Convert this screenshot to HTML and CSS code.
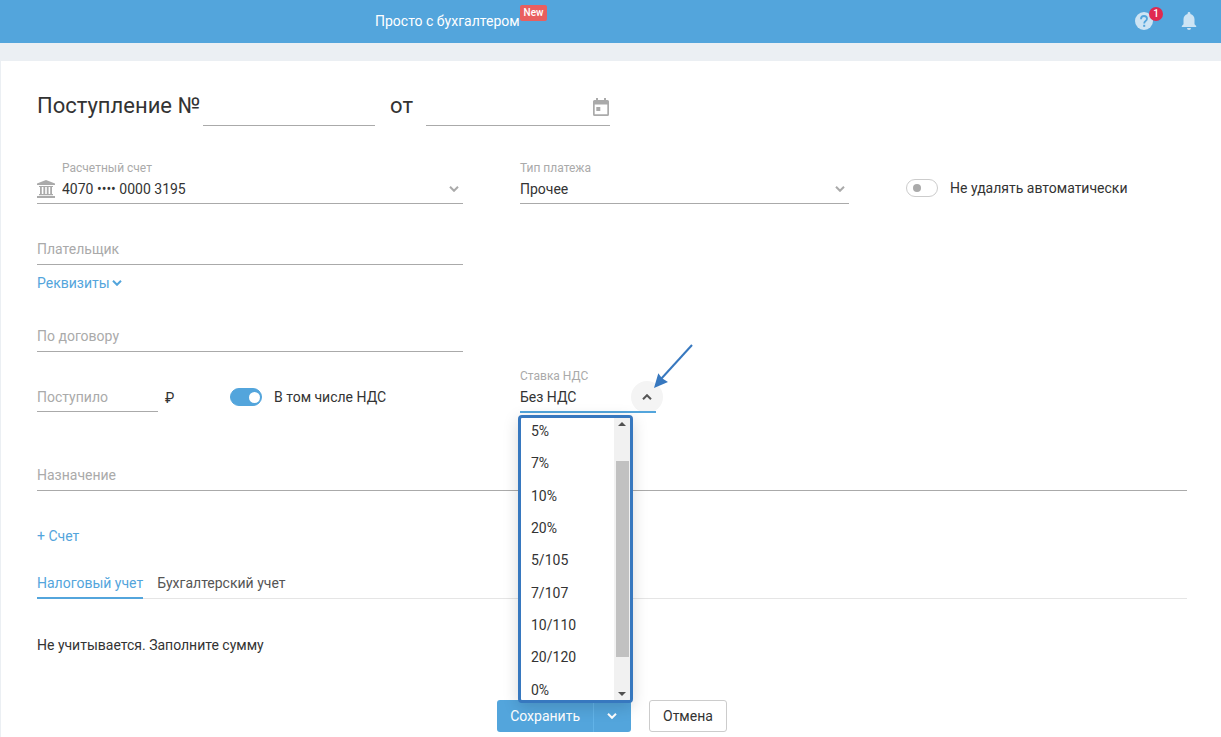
FILE: index.html
```html
<!DOCTYPE html>
<html lang="ru">
<head>
    <meta charset="UTF-8">
    <meta name="viewport" content="width=device-width, initial-scale=1.0">
    <title>Поступление</title>
    <link rel="stylesheet" href="styles.css">
</head>
<body>
    <header class="header">
        <a class="promo" href="#">Просто с бухгалтером<span class="promo-badge">New</span></a>
        <div class="header-icons">
            <button class="icon-btn" type="button" aria-label="Помощь">
                <svg width="18" height="18" viewBox="0 0 18 18">
                    <circle cx="9" cy="9" r="9" fill="#cde4f4"/>
                    <path d="M6 7.200C6 5.200 7.300 4 9 4s3 1.100 3 2.800c0 2-2.800 2.300-2.800 4.700" fill="none" stroke="#53a5dc" stroke-width="1.800"/>
                    <rect x="8.200" y="12.800" width="2" height="2" fill="#53a5dc"/>
                </svg>
                <span class="count">1</span>
            </button>
            <button class="icon-btn" type="button" aria-label="Уведомления">
                <svg width="16" height="20" viewBox="0 0 16 20">
                    <path d="M8 1c-.8 0-1.4.6-1.4 1.4v.5C4 3.500 2.500 5.700 2.500 8.300v5L.8 15v1h14.400v-1l-1.700-1.700v-5c0-2.600-1.500-4.800-4.100-5.400v-.5C9.400 1.600 8.800 1 8 1zM6 17a2 2 0 0 0 4 0z" fill="#cde4f4"/>
                </svg>
            </button>
        </div>
    </header>

    <main class="page">
        <form class="form">
            <div class="title">
                <label for="number">Поступление №</label>
                <input class="control number" type="text" id="number">
                <label class="title-from" for="date">от</label>
                <div class="date">
                    <input class="control" type="text" id="date">
                    <svg class="calendar" width="16" height="18" viewBox="0 0 16 18">
                        <path d="M3 0h2v2h6V0h2v2h1.500A1.500 1.500 0 0 1 16 3.500v13a1.500 1.500 0 0 1-1.500 1.500h-13A1.500 1.500 0 0 1 0 16.500v-13A1.500 1.500 0 0 1 1.500 2H3zM1.700 6.500v9.800h12.600V6.500z" fill="#aaa" fill-rule="evenodd"/>
                        <rect x="3.300" y="9" width="4" height="4" fill="#aaa"/>
                    </svg>
                </div>
            </div>

            <div class="row">
                <div class="field with-icon">
                    <svg class="bank" width="18" height="18" viewBox="0 0 18 18" fill="#aaa">
                        <path d="M9 0l9 3.500V5H0V3.500zM2 6h14v1H2zM2 14h14v1.300H2zM0 16h18v2H0z"/>
                        <path d="M3 7h1.800v7H3zM6.400 7h1.800v7H6.400zM9.800 7h1.800v7H9.800zM13.200 7H15v7h-1.800z"/>
                    </svg>
                    <label class="caption" for="account">Расчетный счет</label>
                    <select class="control" id="account">
                        <option>4070 •••• 0000 3195</option>
                    </select>
                    <svg class="arrow chevron" width="10" height="6" viewBox="0 0 10 6"><path d="M1 .8l4 4 4-4"/></svg>
                </div>
                <div class="field">
                    <label class="caption" for="type">Тип платежа</label>
                    <select class="control" id="type">
                        <option>Прочее</option>
                    </select>
                    <svg class="arrow chevron" width="10" height="6" viewBox="0 0 10 6"><path d="M1 .8l4 4 4-4"/></svg>
                </div>
                <label class="switch">
                    <input type="checkbox">
                    Не удалять автоматически
                </label>
            </div>

            <div class="row payer">
                <div class="field">
                    <input class="control" type="text" placeholder="Плательщик" aria-label="Плательщик">
                    <a class="link details" href="#">Реквизиты <svg class="arrow" width="10" height="6" viewBox="0 0 10 6"><path d="M1 .8l4 4 4-4"/></svg></a>
                </div>
            </div>

            <div class="row contract">
                <div class="field">
                    <input class="control" type="text" placeholder="По договору" aria-label="По договору">
                </div>
            </div>

            <div class="row amounts">
                <div class="amount">
                    <div class="sum">
                        <input class="control" type="text" placeholder="Поступило" aria-label="Поступило">
                        <span>₽</span>
                    </div>
                    <label class="switch">
                        <input type="checkbox" checked>
                        В том числе НДС
                    </label>
                </div>
                <div class="field vat">
                    <label class="caption" for="vat">Ставка НДС</label>
                    <span class="vat-circle"></span>
                    <select class="control" id="vat">
                        <option>Без НДС</option>
                    </select>
                    <svg class="arrow chevron" width="10" height="6" viewBox="0 0 10 6"><path d="M1 5.200l4-4 4 4"/></svg>
                    <svg class="pointer" width="42" height="46" viewBox="0 0 42 46">
                        <path d="M40 2L9 36" stroke="#3778bf" stroke-width="2"/>
                        <path d="M2 45L6.300 30.300l3.700 5 6 3.700z" fill="#3778bf"/>
                    </svg>
                    <div class="menu">
                        <ul class="options" role="listbox" aria-label="Ставка НДС">
                            <li role="option">5%</li>
                            <li role="option">7%</li>
                            <li role="option">10%</li>
                            <li role="option">20%</li>
                            <li role="option">5/105</li>
                            <li role="option">7/107</li>
                            <li role="option">10/110</li>
                            <li role="option">20/120</li>
                            <li role="option">0%</li>
                        </ul>
                        <div class="scrollbar">
                            <svg width="8" height="4" viewBox="0 0 8 4"><path d="M0 4l4-4 4 4z" fill="#505050"/></svg>
                            <span class="thumb"></span>
                            <svg width="8" height="4" viewBox="0 0 8 4"><path d="M0 0l4 4 4-4z" fill="#505050"/></svg>
                        </div>
                    </div>
                </div>
            </div>

            <input class="control purpose" type="text" placeholder="Назначение" aria-label="Назначение">

            <a class="link add-bill" href="#">+ Счет</a>

            <nav class="tabs">
                <a class="tab active" href="#">Налоговый учет</a>
                <a class="tab" href="#">Бухгалтерский учет</a>
            </nav>
            <p class="note">Не учитывается. Заполните сумму</p>

            <div class="actions">
                <div class="save">
                    <button class="btn btn-save" type="button">Сохранить</button>
                    <button class="btn btn-more" type="button" aria-label="Другие действия">
                        <svg class="arrow" width="10" height="6" viewBox="0 0 10 6"><path d="M1 .8l4 4 4-4"/></svg>
                    </button>
                </div>
                <button class="btn btn-cancel" type="button">Отмена</button>
            </div>
        </form>
    </main>
</body>
</html>
```
FILE: styles.css
```css
* {
    box-sizing: border-box;
}
body {
    margin: 0;
    font-family: Roboto, sans-serif;
    font-size: 14px;
    line-height: 20px;
    color: #333;
    background-color: #ebeff3;
}
button, input, select {
    font: inherit;
    color: inherit;
}
a {
    text-decoration: none;
}

/* header */
.header {
    display: flex;
    justify-content: space-between;
    align-items: center;
    height: 43px;
    padding: 0 24px 2px 375px;
    background-color: #53a5dc;
}
.promo {
    display: flex;
    align-items: center;
    color: #fff;
}
.promo-badge {
    padding: 0 4px;
    margin-bottom: 16px;
    font-size: 10px;
    font-weight: 500;
    line-height: 16px;
    background-color: #e95f5f;
    border-radius: 2px;
}
.header-icons {
    display: flex;
    gap: 28px;
    align-items: center;
}
.icon-btn {
    position: relative;
    display: flex;
    padding: 0;
    border: none;
    background: none;
    cursor: pointer;
}
.count {
    position: absolute;
    top: -5px;
    right: -10px;
    width: 14px;
    height: 14px;
    font-size: 10px;
    font-weight: 500;
    line-height: 14px;
    text-align: center;
    color: #fff;
    background-color: #e0294f;
    border-radius: 50%;
}

/* form */
.page {
    margin: 18px 0 0 1px;
    padding: 29px 34px 5px 36px;
    background-color: #fff;
}
.control {
    display: block;
    width: 100%;
    height: 29px;
    padding: 0;
    border: none;
    border-bottom: 1px solid #aaa;
    border-radius: 0;
    outline: none;
    background: none;
    appearance: none;
}
.control::placeholder {
    color: #aaa;
    opacity: 1;
}
.title {
    display: flex;
    align-items: center;
    height: 36px;
    margin-bottom: 35px;
    font-size: 22px;
    line-height: 30px;
}
.title label {
    margin-bottom: 4px;
}
.title .control {
    height: 36px;
}
.title .number {
    width: 172px;
    margin: 0 15px 0 3px;
}
.title-from {
    margin-right: 13px;
}
.date {
    position: relative;
    width: 184px;
}
.calendar {
    position: absolute;
    top: 8px;
    right: 1px;
}
.row {
    display: grid;
    grid-template-columns: 426fr 329fr 281fr;
    column-gap: 57px;
    align-items: end;
}
.field {
    position: relative;
}
.caption {
    display: block;
    font-size: 12px;
    line-height: 14px;
    color: #aaa;
}
.with-icon .caption,
.with-icon .control {
    padding-left: 25px;
}
.bank {
    position: absolute;
    left: 0;
    bottom: 6px;
}
.arrow {
    fill: none;
    stroke: currentColor;
    stroke-width: 2;
}
.chevron {
    position: absolute;
    right: 4px;
    bottom: 12px;
    color: #aaa;
    pointer-events: none;
}
.switch {
    display: flex;
    gap: 12px;
    align-items: center;
    height: 32px;
}
.switch input {
    display: flex;
    align-items: center;
    width: 32px;
    height: 18px;
    margin: 0;
    padding: 0 6px;
    border: 1px solid #ccc;
    border-radius: 9px;
    background-color: #fff;
    appearance: none;
}
.switch input::before {
    content: "";
    width: 8px;
    height: 8px;
    border-radius: 50%;
    background-color: #aaa;
}
.switch input:checked {
    justify-content: flex-end;
    padding: 0 1px;
    border-color: #53a5dc;
    background-color: #53a5dc;
}
.switch input:checked::before {
    width: 11px;
    height: 11px;
    background-color: #fff;
}
.link {
    color: #53a5dc;
}
.payer {
    margin-top: 32px;
}
.payer .control,
.contract .control,
.purpose {
    padding-bottom: 2px;
}
.details {
    display: inline-flex;
    gap: 2px;
    align-items: center;
    margin-top: 8px;
}
.contract {
    margin-top: 30px;
}
.amounts {
    margin-top: 17px;
}
.amount {
    display: flex;
    align-items: end;
}
.amount .switch {
    height: 30px;
}
.sum {
    display: flex;
    gap: 7px;
    align-items: center;
    width: 193px;
}
.sum .control {
    width: 121px;
}

/* vat dropdown */
.vat {
    width: 136px;
    margin-bottom: -1px;
}
.vat .control {
    position: relative;
    height: 30px;
    border-bottom: 2px solid #53a5dc;
}
.vat .chevron {
    bottom: 13px;
    color: #555;
}
.vat-circle {
    position: absolute;
    right: -7px;
    bottom: 0;
    width: 32px;
    height: 32px;
    border-radius: 50%;
    background-color: #f4f4f4;
}
.pointer {
    position: absolute;
    right: -38px;
    bottom: 24px;
}
.menu {
    position: absolute;
    top: 46px;
    left: -2px;
    display: flex;
    width: 115px;
    height: 288px;
    overflow: hidden;
    border: 3px solid #3778bf;
    border-radius: 4px;
    background-color: #fff;
    box-shadow: 0 4px 16px rgba(0, 0, 0, 0.15);
}
.options {
    display: flex;
    flex: 1;
    flex-direction: column;
    margin: -3px 0 -6px;
    padding: 0 10px;
    list-style: none;
}
.options li {
    display: flex;
    flex: 1;
    align-items: center;
}
.scrollbar {
    display: flex;
    flex-direction: column;
    align-items: center;
    justify-content: space-between;
    width: 16px;
    padding: 4px 0;
    background-color: #f1f1f1;
}
.thumb {
    width: 13px;
    height: 196px;
    background-color: #c1c1c1;
}

.purpose {
    margin-top: 50px;
}
.add-bill {
    display: inline-block;
    margin-top: 35px;
}
.tabs {
    display: flex;
    gap: 14px;
    margin-top: 27px;
    border-bottom: 1px solid #e5e5e5;
}
.tab {
    height: 26px;
    margin-bottom: -1px;
    color: #555;
}
.tab.active {
    color: #53a5dc;
    border-bottom: 2px solid #53a5dc;
}
.note {
    margin: 36px 0 45px;
}

/* buttons */
.actions {
    display: flex;
    gap: 18px;
    justify-content: center;
}
.save {
    display: flex;
}
.btn {
    height: 32px;
    padding: 0 13px;
    border: none;
    border-radius: 3px;
    cursor: pointer;
}
.btn-save {
    color: #fff;
    background-color: #53a5dc;
    border-radius: 3px 0 0 3px;
}
.btn-more {
    padding: 0 14px 0 13px;
    color: #fff;
    background-color: #53a5dc;
    border-left: 1px solid #62b3e8;
    border-radius: 0 3px 3px 0;
}
.btn-more svg {
    display: block;
}
.btn-cancel {
    background-color: #fff;
    border: 1px solid #ccc;
}
```
